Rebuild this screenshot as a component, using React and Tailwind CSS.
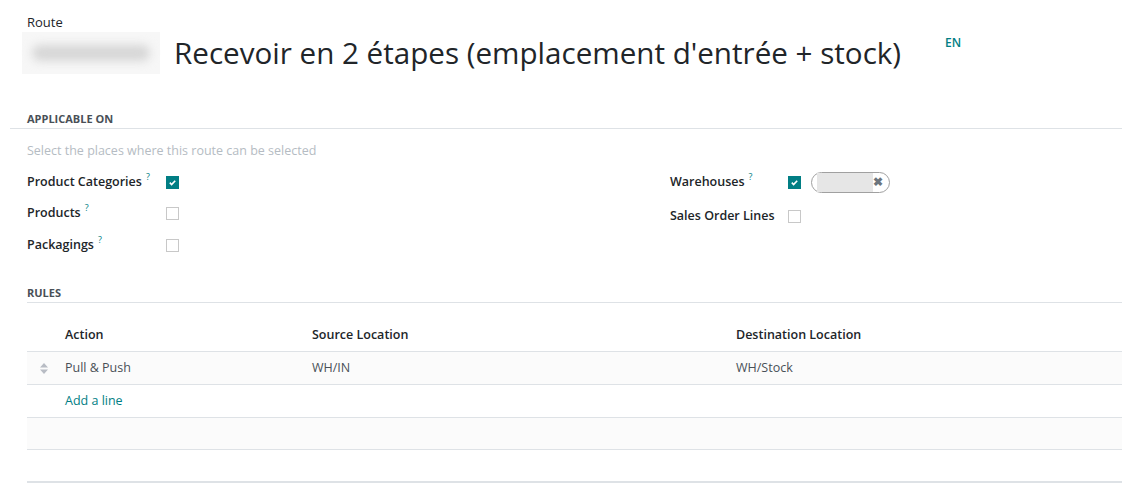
import React from 'react';

const font = { fontFamily: '"Open Sans", "Noto Sans", sans-serif' };

function Checkbox({ checked }) {
    if (checked) {
        return (
            <span className="inline-flex w-[13px] h-[13px] bg-[#017e84] items-center justify-center">
                <svg width="9" height="9" viewBox="0 0 10 10">
                    <path d="M2 5.2l2 2 4-4.2" stroke="white" strokeWidth="1.8" fill="none" />
                </svg>
            </span>
        );
    }
    return <span className="inline-block w-[13px] h-[13px] border border-[#c8c8c8] bg-white"></span>;
}

function Field({ label, help, checked, labelWidth, height = 'h-[32px]', children }) {
    return (
        <div className={`flex items-center ${height}`}>
            <div className={`${labelWidth} text-[12.5px] font-semibold text-[#212529]`}>
                {label}
                {help && <span className="relative -top-[6px] text-[9px] text-[#017e84] ml-[4px] font-normal">?</span>}
            </div>
            <Checkbox checked={checked} />
            {children}
        </div>
    );
}

export default function App() {
    return (
        <div className="w-[1122px] h-[500px] bg-white overflow-hidden text-[#212529]" style={font}>
            {/* En-tête */}
            <div className="pl-[27px] pt-[13px]">
                <div className="text-[13px] leading-[18px]">Route</div>
                <div className="flex items-center -ml-[5px] h-[44px]">
                    <div className="w-[138px] h-[42px] bg-[#f7f7f7] flex items-center justify-center">
                        <div className="w-[118px] h-[16px] rounded-full bg-[#d6d6d6] blur-[5px]"></div>
                    </div>
                    <h1 className="ml-[14px] text-[29.6px] font-normal leading-none">
                        Recevoir en 2 étapes (emplacement d'entrée + stock)
                    </h1>
                    <span className="ml-[44px] -mt-[20px] text-[12px] text-[#017e84] font-semibold">EN</span>
                </div>
            </div>

            {/* Applicable on */}
            <div className="mt-[37px] pl-[10px]">
                <div className="pl-[17px] text-[11px] font-bold text-[#495057] uppercase leading-[14px] pb-[2px] border-b border-[#dee2e6]">
                    Applicable on
                </div>
            </div>
            <div className="pl-[27px]">
                <div className="mt-[13px] text-[12.5px] text-[#b5bcc3] leading-[18px]">
                    Select the places where this route can be selected
                </div>
                <div className="flex mt-[6px]">
                    <div className="w-[643px]">
                        <Field label="Product Categories" help checked labelWidth="w-[139px]" />
                        <Field label="Products" help labelWidth="w-[139px]" height="h-[31px]" />
                        <Field label="Packagings" help labelWidth="w-[139px]" />
                    </div>
                    <div className="-mt-[1px]">
                        <Field label="Warehouses" help checked labelWidth="w-[118px]" height="h-[34px]">
                            <span className="ml-[10px] w-[79px] h-[21px] rounded-full border border-[#a0a0a0] flex items-center pl-[5px] pr-[6px]">
                                <span className="h-[19px] w-[56px] bg-[#e6e6e6]"></span>
                                <span className="ml-auto text-[#6c757d] text-[12px] font-bold leading-none">✖</span>
                            </span>
                        </Field>
                        <Field label="Sales Order Lines" labelWidth="w-[118px]" height="h-[34px]" />
                    </div>
                </div>
            </div>

            {/* Rules */}
            <div className="pl-[27px] mt-[25px]">
                <div className="text-[11px] font-bold text-[#495057] uppercase leading-[14px] pb-[2px] border-b border-[#dee2e6]">
                    Rules
                </div>
                <div className="mt-[17px] text-[12.5px]">
                    <div className="flex items-center h-[32px] border-b border-[#dee2e6] font-semibold">
                        <div className="w-[38px]"></div>
                        <div className="w-[247px]">Action</div>
                        <div className="w-[424px]">Source Location</div>
                        <div>Destination Location</div>
                    </div>
                    <div className="flex items-center h-[33px] border-b border-[#dee2e6] bg-[#fbfbfb] text-[#495057]">
                        <div className="w-[38px] flex pl-[13px]">
                            <svg width="8" height="11" viewBox="0 0 8 11">
                                <path d="M4 0L8 4.5H0z M4 11L0 6.5h8z" fill="#b8bcc4" />
                            </svg>
                        </div>
                        <div className="w-[247px]">Pull &amp; Push</div>
                        <div className="w-[424px]">WH/IN</div>
                        <div>WH/Stock</div>
                    </div>
                    <div className="flex items-center h-[33px] border-b border-[#dee2e6]">
                        <div className="w-[38px]"></div>
                        <div className="text-[#017e84]">Add a line</div>
                    </div>
                    <div className="h-[32px] border-b border-[#dee2e6] bg-[#fbfbfb]"></div>
                    <div className="h-[33px] border-b-2 border-[#dee2e6]"></div>
                </div>
            </div>
        </div>
    );
}
